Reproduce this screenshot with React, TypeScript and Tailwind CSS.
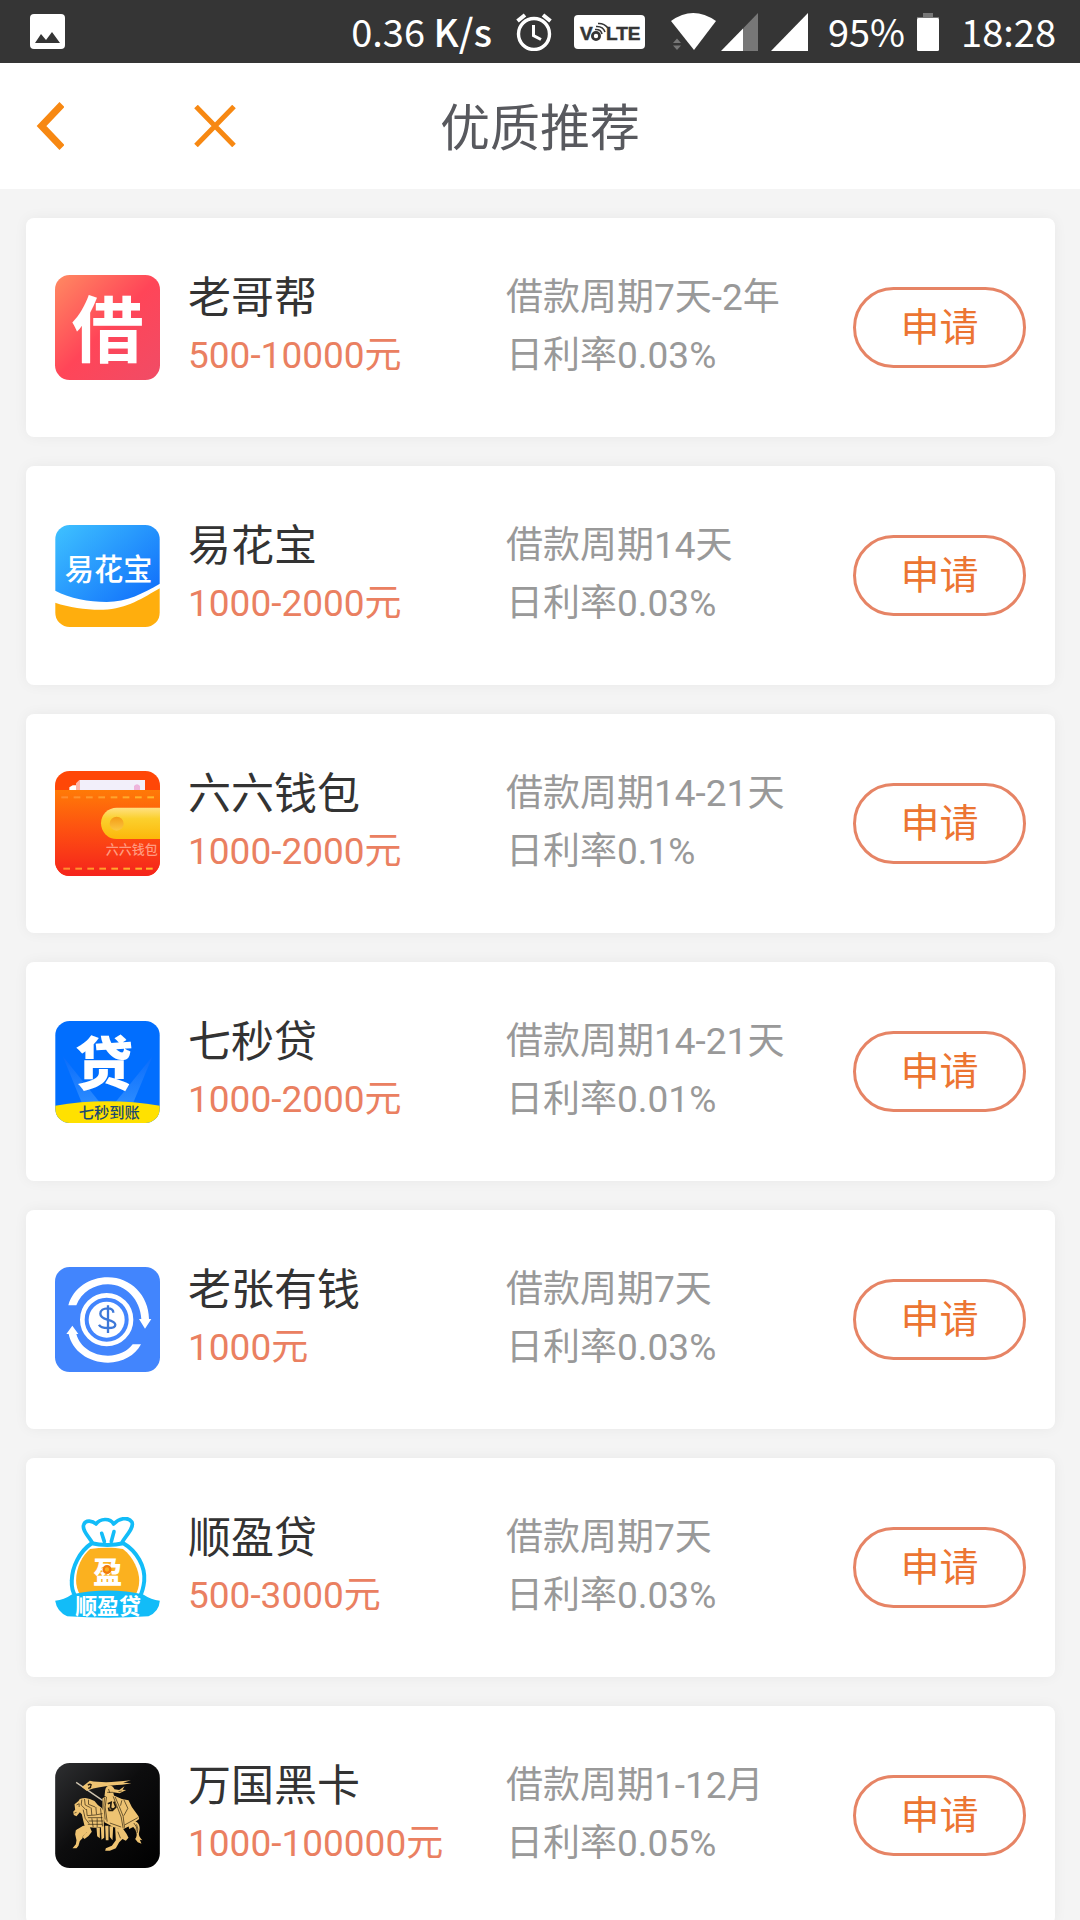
import React from 'react';

type Loan = {
  id: string;
  name: string;
  amount: string;
  period: string;
  rate: string;
  logo: React.ReactNode;
};

const cjk = { fontFamily: '"Noto Sans CJK SC", sans-serif' };

const JieLogo = () => (
  <svg viewBox="0 0 315 315" className="w-[105px] h-[105px] overflow-visible" aria-hidden="true">
    <defs>
      <linearGradient id="jie" x1="0" y1="0" x2="1" y2="1">
        <stop offset="0" stopColor="#ff8a62" />
        <stop offset="0.5" stopColor="#ff4558" />
        <stop offset="1" stopColor="#f04c66" />
      </linearGradient>
    </defs>
    <rect width="315" height="315" rx="44" fill="url(#jie)" />
    <text x="158" y="242" textAnchor="middle" fontSize="216" fontWeight="700" fill="#fff" style={cjk}>借</text>
  </svg>
);

const YihuabaoLogo = () => (
  <svg viewBox="45 44 315 307" className="w-[105px] h-[102px]" aria-hidden="true">
    <defs>
      <linearGradient id="yhb" x1="0" y1="0" x2="1" y2="0.8">
        <stop offset="0" stopColor="#3fc2ff" />
        <stop offset="1" stopColor="#1272fb" />
      </linearGradient>
      <clipPath id="yhbClip">
        <rect x="45" y="44" width="315" height="307" rx="44" />
      </clipPath>
    </defs>
    <g clipPath="url(#yhbClip)">
      <rect x="45" y="44" width="315" height="307" fill="#fff" />
      <path d="M45 44H360V221C312 249 260 276 200 276C145 276 90 265 45 242Z" fill="url(#yhb)" />
      <path d="M45 278C90 293 140 300 190 299C262 296 310 262 360 234V351H45Z" fill="#ffae0d" />
    </g>
    <text x="206" y="211" textAnchor="middle" fontSize="88" fontWeight="500" fill="#fff" style={cjk}>易花宝</text>
  </svg>
);

const WalletLogo = () => (
  <svg viewBox="45 47 315 315" className="w-[105px] h-[105px]" aria-hidden="true">
    <defs>
      <linearGradient id="walletBody" x1="0" y1="0" x2="0" y2="1">
        <stop offset="0" stopColor="#ff7a07" />
        <stop offset="0.5" stopColor="#fd4d12" />
        <stop offset="1" stopColor="#f5231c" />
      </linearGradient>
      <linearGradient id="walletClasp" x1="0" y1="0" x2="0" y2="1">
        <stop offset="0" stopColor="#ffe183" />
        <stop offset="0.35" stopColor="#fbd02d" />
        <stop offset="1" stopColor="#fcb80a" />
      </linearGradient>
      <linearGradient id="walletSnap" x1="0" y1="0" x2="0" y2="1">
        <stop offset="0" stopColor="#f39c16" />
        <stop offset="1" stopColor="#fbc742" />
      </linearGradient>
      <linearGradient id="walletStitch" gradientUnits="userSpaceOnUse" x1="60" y1="0" x2="345" y2="0">
        <stop offset="0" stopColor="#ff8a2e" />
        <stop offset="1" stopColor="#ffb92a" />
      </linearGradient>
      <clipPath id="walletClip">
        <rect x="45" y="47" width="315" height="315" rx="44" />
      </clipPath>
    </defs>
    <g clipPath="url(#walletClip)">
      <rect x="45" y="47" width="315" height="315" fill="#ff4707" />
      <path d="M88 104V96L98 90H112V104Z" fill="#fff" />
      <path d="M108 104V84L118 74H130V104Z" fill="#ffb5a8" />
      <path d="M120 74H315V104H120Z" fill="#f2effa" />
      <path d="M282 104V92Q291 82 300 92V104Z" fill="#eeb4dc" />
      <rect x="45" y="104" width="315" height="258" fill="url(#walletBody)" />
      <g fill="url(#walletStitch)">
        {[64, 101, 138, 175, 212, 248, 285, 322].map(x => (
          <rect key={x} x={x} y="123" width="20" height="6" />
        ))}
        {[70, 106, 142, 178, 214, 250, 286, 318].map(x => (
          <rect key={x} x={x} y="337" width="20" height="6" />
        ))}
      </g>
      <path d="M360 157H230A47 47 0 0 0 230 251H360Z" fill="url(#walletClasp)" />
      <circle cx="230" cy="205" r="21" fill="url(#walletSnap)" />
      <text x="197" y="297" fontSize="39" fontWeight="500" fill="#ff9a80" style={cjk}>六六钱包</text>
    </g>
  </svg>
);

const QimiaoLogo = () => (
  <svg viewBox="45 44 315 307" className="w-[105px] h-[102px] overflow-visible" aria-hidden="true">
    <defs>
      <linearGradient id="beam" x1="0" y1="0" x2="0" y2="1">
        <stop offset="0" stopColor="#0a6cfb" />
        <stop offset="1" stopColor="#2b8bff" />
      </linearGradient>
      <clipPath id="qmClip">
        <rect x="45" y="44" width="315" height="307" rx="44" />
      </clipPath>
    </defs>
    <g clipPath="url(#qmClip)">
      <rect x="45" y="44" width="315" height="307" fill="#016efe" />
      <path d="M68 150L180 290H125Z" fill="url(#beam)" />
      <path d="M338 150L225 290H280Z" fill="url(#beam)" />
      <path d="M45 299Q200 272 360 299V351H45Z" fill="#ffe100" />
    </g>
    <text x="192" y="236" textAnchor="middle" fontSize="174" fontWeight="900" fill="#fff" style={cjk}>贷</text>
    <text x="208" y="337" textAnchor="middle" fontSize="46" fontWeight="500" fill="#1d4a70" style={cjk}>七秒到账</text>
  </svg>
);

const LaozhangLogo = () => (
  <svg viewBox="45 47 315 315" className="w-[105px] h-[105px]" aria-hidden="true">
    <rect x="45" y="47" width="315" height="315" rx="44" fill="#4285fd" />
    <g fill="#fff">
      <path d="M85 162C100 110 148 78 204 78C272 78 326 132 327 203H334L315 232L297 203H304C301 146 258 99 204 99C162 99 125 122 109 162Z" />
      <path d="M303 279C286 312 247 334 204 334C146 334 96 298 86 248H79L97 223L115 248H109C120 288 159 313 204 313C236 313 262 300 278 279Z" />
      <circle cx="200" cy="205" r="54" />
    </g>
    <circle cx="200" cy="205" r="73" fill="none" stroke="#fff" strokeWidth="14" />
    <path d="M220 184C220 174 211 171 203 171C191 171 181 177 181 187C181 197 190 201 202 205C216 209 226 213 226 220C226 227 215 230 204 230C192 230 181 228 177 220M204 162V245" fill="none" stroke="#3d78d8" strokeWidth="7" />
  </svg>
);

const ShunyingLogo = () => (
  <svg viewBox="45 45 315 307" className="w-[105px] h-[102px]" aria-hidden="true">
    <path d="M157 123C150 108 124 85 131 68C137 52 158 57 168 66C180 49 210 47 221 66C236 50 264 42 276 60C284 78 255 104 246 122" fill="#fff" stroke="#12bcf8" strokeWidth="11" strokeLinejoin="round" />
    <path d="M185 94L193 119M222 89L214 119" stroke="#12bcf8" strokeWidth="11" strokeLinecap="round" />
    <path d="M155 124C182 131 222 131 250 124C290 147 317 194 313 238C311 255 308 270 300 284H106C97 270 94 255 95 236C96 195 118 149 155 124Z" fill="#fff" stroke="#12bcf8" strokeWidth="12" />
    <path d="M150 141C185 136 220 136 249 141C281 166 298 206 298 236C298 256 292 270 286 281H121C112 267 108 250 108 236C108 197 127 160 150 141Z" fill="#fbb11f" />
    <text x="203" y="245" textAnchor="middle" fontSize="88" fontWeight="900" fill="#fff" style={cjk}>盈</text>
    <circle cx="201" cy="203" r="10" fill="#fbb11f" stroke="#f17b0b" strokeWidth="7" />
    <path d="M45 297Q72 294 95 278Q145 266 204 266Q260 266 310 278Q334 294 360 297Q358 329 326 344Q204 352 81 344Q50 329 45 297Z" fill="#12bcf8" />
    <text x="204" y="336" textAnchor="middle" fontSize="66" fontWeight="700" fill="#fff" style={cjk}>顺盈贷</text>
  </svg>
);

const KnightLogo = () => (
  <svg viewBox="46 42 314 315" className="w-[105px] h-[105px]" aria-hidden="true">
    <defs>
      <linearGradient id="knight" x1="0" y1="0" x2="1" y2="1">
        <stop offset="0" stopColor="#2e2f31" />
        <stop offset="0.45" stopColor="#0d0d0e" />
        <stop offset="1" stopColor="#000" />
      </linearGradient>
    </defs>
    <rect x="46" y="42" width="314" height="315" rx="44" fill="url(#knight)" />
    <g transform="translate(90 84)">
      <path d="M19 16L98 70" stroke="#cfc4b0" strokeWidth="4" />
      <g fill="#eec372">
        <path d="M36 30L60 11C90 17 125 17 183 10L160 17L185 19C150 27 105 22 50 41Z" />
        <path d="M106 40C108 22 128 20 134 37L148 39L164 28L158 38L169 39L149 49L130 46L133 58H104Z" />
        <path d="M38 64L47 63L60 66L74 72L84 84L95 92L102 104V150L76 152L58 151L50 160L48 170L39 178L38 184L30 192L26 206L20 214H8L18 202L20 190L16 172L18 160L34 154L44 146L40 130L36 112L30 106L20 118L12 114L10 104L16 98L14 82L26 72L30 66Z" />
        <path d="M40 146L60 150L66 164L56 177L44 186L38 180L50 166L34 160L24 166L20 158Z" />
        <path d="M98 64L112 56L134 56L156 66L176 70L186 90L206 118L208 126L178 148L156 158L130 150L104 136L98 106Z" />
        <path d="M136 152L160 156L170 170L176 182L168 191L158 186L148 196L138 214L120 221H106L108 214L126 206L138 190Z" />
        <path d="M176 146L192 132C208 134 212 150 208 164C204 178 214 184 218 190L210 188L215 200L204 196L196 186C206 174 198 158 190 150L178 156Z" />
        <path d="M80 152H90V184L82 178ZM93 148H103V182L95 188ZM106 146H116V190H108ZM119 148H130L128 190L120 180Z" />
      </g>
      <g fill="none" stroke="#2a1f0e" strokeWidth="2">
        <path d="M36 68L34 84L48 98M44 66L46 84L62 92M56 68L56 82L76 90M40 98L46 124L58 140M50 96L52 116L76 114L98 110M54 122L98 122M56 132H100M54 142H98M64 92L66 114M78 90L80 112M66 124L70 150M82 124V150" />
        <path d="M104 62L102 86L106 128M110 60L106 90L112 134M130 58L140 84L154 120L160 154M136 60L148 88L160 118L164 152M162 68L174 94L162 116M156 70L152 86M120 138L154 150M164 144L204 122M92 94L98 148" />
        <path d="M200 142L204 156L202 168M192 138L200 150L198 164M144 164L152 184M112 46H130M116 36L120 48M146 44L156 42" />
        <path d="M20 84L28 80L28 90M14 108L20 106" />
      </g>
      <path d="M114 80L124 76L122 92L130 98L138 90L132 74M116 92L118 100L130 100" fill="none" stroke="#21190e" strokeWidth="5" />
      <path d="M54 25Q60 20 64 23L61 32L55 34M64 31H59" fill="none" stroke="#21190e" strokeWidth="4" />
    </g>
  </svg>
);

const loans: Loan[] = [
  { id: 'lgb', name: '老哥帮', amount: '500-10000元', period: '借款周期7天-2年', rate: '日利率0.03%', logo: <JieLogo /> },
  { id: 'yhb', name: '易花宝', amount: '1000-2000元', period: '借款周期14天', rate: '日利率0.03%', logo: <YihuabaoLogo /> },
  { id: 'llqb', name: '六六钱包', amount: '1000-2000元', period: '借款周期14-21天', rate: '日利率0.1%', logo: <WalletLogo /> },
  { id: 'qmd', name: '七秒贷', amount: '1000-2000元', period: '借款周期14-21天', rate: '日利率0.01%', logo: <QimiaoLogo /> },
  { id: 'lzyq', name: '老张有钱', amount: '1000元', period: '借款周期7天', rate: '日利率0.03%', logo: <LaozhangLogo /> },
  { id: 'syd', name: '顺盈贷', amount: '500-3000元', period: '借款周期7天', rate: '日利率0.03%', logo: <ShunyingLogo /> },
  { id: 'wghk', name: '万国黑卡', amount: '1000-100000元', period: '借款周期1-12月', rate: '日利率0.05%', logo: <KnightLogo /> },
];

const StatusBar = () => (
  <div className="flex items-center justify-between h-[63px] pl-[30px] pr-5 bg-[#353535] text-white text-[38px] leading-[60px] font-['Noto_Sans_CJK_SC',sans-serif]">
    <svg viewBox="0 0 35 35" className="w-[35px] h-[35px]" aria-hidden="true">
      <rect width="35" height="35" rx="4" fill="#fff" />
      <path d="M5 29L11 20L16 26L22 18L30 29Z" fill="#353535" />
    </svg>
    <div className="flex items-center">
      <span className="pb-[2px]">0.36 <span className="font-medium">K/s</span></span>
      <svg viewBox="0 0 36 38" className="w-9 h-[38px] ml-6" fill="none" stroke="#fff" aria-hidden="true">
        <circle cx="18" cy="21" r="15.5" strokeWidth="3.4" />
        <path d="M1.5 8L9 2M34.5 8L27 2" strokeWidth="4" />
        <path d="M17.5 12V22.5L25 26.5" strokeWidth="3" />
      </svg>
      <svg viewBox="0 0 71 34" className="w-[71px] h-[34px] ml-[22px]" aria-hidden="true">
        <rect width="71" height="34" rx="4" fill="#fff" />
        <g fill="#353535" stroke="#353535" strokeWidth="0.5" fontSize="19" fontWeight="700" style={{ fontFamily: '"Liberation Sans", sans-serif' }}>
          <text x="6" y="25">V</text>
          <text x="32" y="25">LTE</text>
        </g>
        <g fill="none" stroke="#353535">
          <circle cx="22" cy="21" r="3.6" strokeWidth="2.8" />
          <path d="M21 14.5Q27 14 28 19M22 11.5Q29 11 31 17M24 8.5Q30 8 34 13" strokeWidth="1.6" />
        </g>
      </svg>
      <svg viewBox="0 0 45 37" className="w-[45px] h-[37px] ml-[26px]" aria-hidden="true">
        <path d="M0 8Q22 -8 45 8L23 37Z" fill="#fff" />
        <path d="M2 30L6 25.5L10 30ZM2 32.5H10L6 37Z" fill="#777" />
      </svg>
      <svg viewBox="0 0 37 38" className="w-[37px] h-[38px] ml-[5px]" aria-hidden="true">
        <path d="M22 15.5L37 0V38H22Z" fill="#777" />
        <path d="M0 38L22 15.5V38Z" fill="#fff" />
      </svg>
      <svg viewBox="0 0 37 38" className="w-[37px] h-[38px] ml-[13px]" aria-hidden="true">
        <path d="M0 38L37 0V38Z" fill="#fff" />
      </svg>
      <span className="ml-5 pb-[2px]">95%</span>
      <svg viewBox="0 0 22 38" className="w-[22px] h-[38px] ml-3" aria-hidden="true">
        <path d="M6 0H16V4H22V7H0V4H6Z" fill="#777" />
        <rect y="5" width="22" height="33" rx="1.5" fill="#fff" />
      </svg>
      <span className="ml-[22px] mr-1 pb-[2px]">18:28</span>
    </div>
  </div>
);

const App = () => {
  return (
    <div className="min-h-screen bg-[#f4f4f4] font-['Roboto','Noto_Sans_CJK_SC',sans-serif]">
      <StatusBar />

      <header className="grid grid-cols-[1fr_auto_1fr] items-center h-[126px] bg-white">
        <div className="flex items-center">
          <button type="button" aria-label="返回" className="pl-9">
            <svg viewBox="0 0 28 48" className="w-7 h-12" fill="none" stroke="#f78812" strokeWidth="7">
              <path d="M26 2.5L5.5 24L26 45.5" />
            </svg>
          </button>
          <button type="button" aria-label="关闭" className="pl-[130px]">
            <svg viewBox="0 0 42 42" className="w-[42px] h-[42px]" fill="none" stroke="#f78812" strokeWidth="5">
              <path d="M2 1.5L40 40.5M40 1.5L2 40.5" />
            </svg>
          </button>
        </div>
        <h1 className="pt-[6px] text-[50px] leading-[60px] text-[#58595e]">优质推荐</h1>
      </header>

      <main className="flex flex-col gap-[29px] pl-[26px] pr-[25px] py-[29px]">
        {loans.map(loan => (
          <section key={loan.id} className="flex items-center h-[219px] px-[29px] bg-white rounded-lg shadow-[0_0_14px_rgba(0,0,0,0.05)]">
            <div className="shrink-0">{loan.logo}</div>
            <div className="flex-1 grid grid-cols-[318px_1fr] ml-7 pb-[2px] text-[37px] leading-[58px] whitespace-nowrap">
              <div>
                <h2 className="text-[43px] text-[#333]">{loan.name}</h2>
                <p className="text-[#ea8061]">{loan.amount}</p>
              </div>
              <div className="text-[#999]">
                <p>{loan.period}</p>
                <p>{loan.rate}</p>
              </div>
            </div>
            <button type="button" className="shrink-0 w-[173px] h-[81px] border-[3px] border-[#e68465] rounded-full text-[39px] leading-[72px] text-[#ec7532]">
              申请
            </button>
          </section>
        ))}
      </main>
    </div>
  );
};

export default App;
